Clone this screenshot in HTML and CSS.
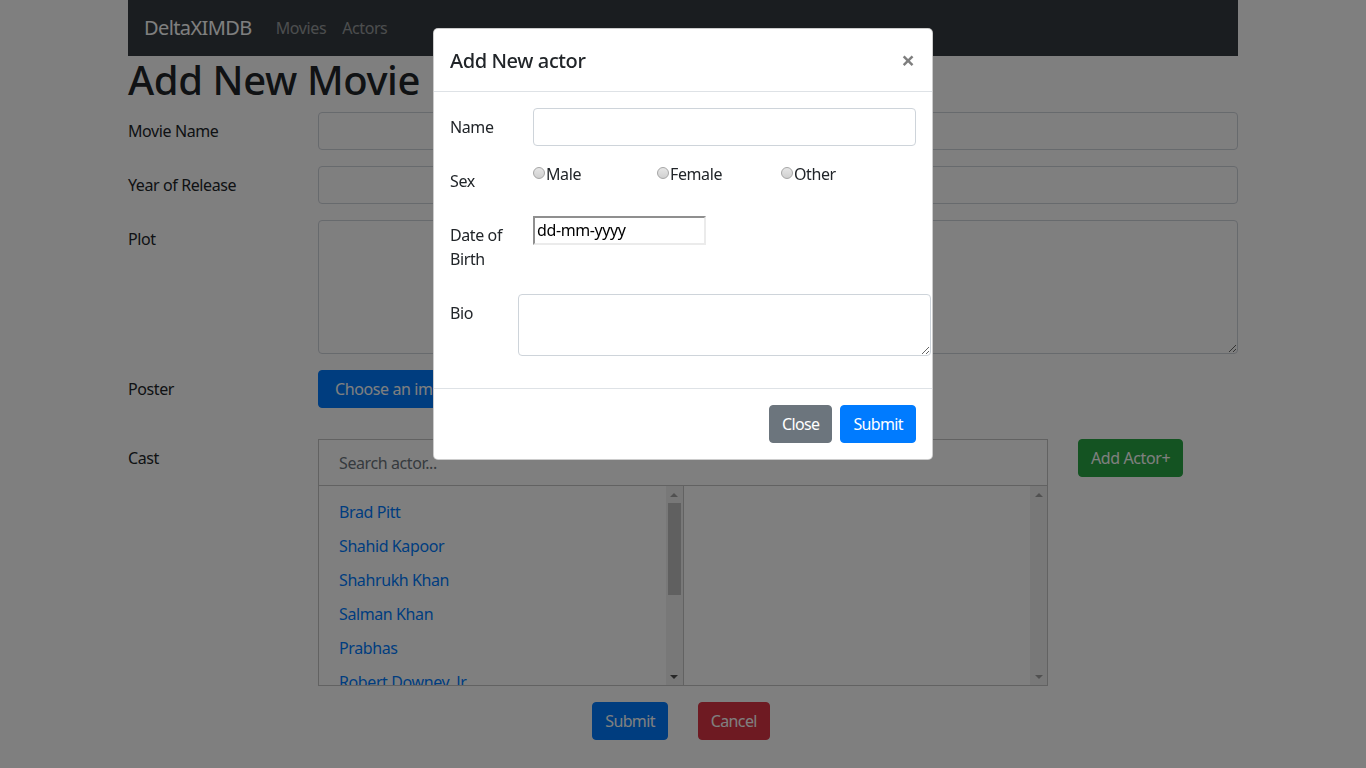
FILE: index.html
```html
<!DOCTYPE html>
<html lang="en">
<head>
<meta charset="utf-8">
<title>DeltaXIMDB - Add New Movie</title>
<link rel="stylesheet" href="styles.css">
</head>
<body>
<div class="container">
  <nav class="navbar">
    <a class="brand" href="#">DeltaXIMDB</a>
    <a class="nav-link" href="#">Movies</a>
    <a class="nav-link" href="#">Actors</a>
  </nav>
  <h1 class="page-title">Add New Movie</h1>
  <form class="movie-form">
    <div class="form-row">
      <label class="col-label">Movie Name</label>
      <div class="col-field"><input class="form-control" type="text"></div>
    </div>
    <div class="form-row">
      <label class="col-label">Year of Release</label>
      <div class="col-field"><input class="form-control" type="text"></div>
    </div>
    <div class="form-row">
      <label class="col-label">Plot</label>
      <div class="col-field"><textarea class="form-control plot" rows="5"></textarea></div>
    </div>
    <div class="form-row poster-row">
      <label class="col-label">Poster</label>
      <div class="col-field"><span class="btn btn-primary btn-file">Choose an image...</span></div>
    </div>
    <div class="form-row">
      <label class="col-label">Cast</label>
      <div class="cast-box">
        <div class="cast-search">Search actor...</div>
        <div class="cast-panes">
          <div class="pane">
            <ul class="pane-list">
              <li><a href="#">Brad Pitt</a></li>
              <li><a href="#">Shahid Kapoor</a></li>
              <li><a href="#">Shahrukh Khan</a></li>
              <li><a href="#">Salman Khan</a></li>
              <li><a href="#">Prabhas</a></li>
              <li><a href="#">Robert Downey, Jr</a></li>
            </ul>
            <div class="scrollbar">
              <span class="sb-btn"><span class="arrow-up off"></span></span>
              <span class="sb-thumb"></span>
              <span class="sb-fill"></span>
              <span class="sb-btn"><span class="arrow-down"></span></span>
            </div>
          </div>
          <div class="pane">
            <ul class="pane-list"></ul>
            <div class="scrollbar">
              <span class="sb-btn"><span class="arrow-up off"></span></span>
              <span class="sb-fill"></span>
              <span class="sb-btn"><span class="arrow-down off"></span></span>
            </div>
          </div>
        </div>
      </div>
      <div class="cast-side"><button type="button" class="btn btn-success">Add Actor+</button></div>
    </div>
    <div class="form-actions">
      <button type="button" class="btn btn-primary">Submit</button>
      <button type="button" class="btn btn-danger">Cancel</button>
    </div>
  </form>
</div>

<div class="backdrop"></div>

<div class="modal">
  <div class="modal-dialog">
    <div class="modal-content">
      <div class="modal-header">
        <h5 class="modal-title">Add New actor</h5>
        <button type="button" class="close">&times;</button>
      </div>
      <div class="modal-body">
        <div class="m-row">
          <label class="m-label">Name</label>
          <div class="m-field"><input class="form-control" type="text"></div>
        </div>
        <div class="m-row">
          <label class="m-label">Sex</label>
          <div class="m-field radio-group">
            <label class="radio-opt"><input type="radio" name="sex">Male</label>
            <label class="radio-opt"><input type="radio" name="sex">Female</label>
            <label class="radio-opt"><input type="radio" name="sex">Other</label>
          </div>
        </div>
        <div class="m-row">
          <label class="m-label">Date of Birth</label>
          <div class="m-field"><div class="date-box">dd-mm-yyyy</div></div>
        </div>
        <div class="m-row">
          <label class="m-label">Bio</label>
          <div class="m-field"><textarea class="form-control bio" rows="2"></textarea></div>
        </div>
      </div>
      <div class="modal-footer">
        <button type="button" class="btn btn-secondary">Close</button>
        <button type="button" class="btn btn-primary">Submit</button>
      </div>
    </div>
  </div>
</div>
</body>
</html>
```
FILE: styles.css
```css
* { box-sizing: border-box; }

body {
  margin: 0;
  font-family: "Noto Sans", "Open Sans", sans-serif;
  font-size: 16px;
  line-height: 1.5;
  letter-spacing: -0.025em;
  color: #212529;
  background: #fff;
  overflow: hidden;
}

.container {
  width: 1110px;
  margin: 0 auto;
}

/* navbar */
.navbar {
  display: flex;
  align-items: center;
  height: 56px;
  padding: 8px 16px;
  background: #343a40;
}
.brand {
  font-size: 20px;
  line-height: 30px;
  padding: 5px 0;
  margin-right: 16px;
  color: #fff;
  text-decoration: none;
  letter-spacing: -0.03em;
}
.nav-link {
  padding: 8px;
  color: rgba(255, 255, 255, 0.5);
  text-decoration: none;
}

.page-title {
  margin: 0 0 8px;
  font-size: 40px;
  font-weight: 500;
  line-height: 1.2;
  letter-spacing: -0.01em;
}

/* form */
.form-row {
  display: flex;
  align-items: flex-start;
  margin-bottom: 16px;
}
.col-label {
  flex: 0 0 190px;
  padding: 7px 0;
  line-height: 24px;
}
.col-field { flex: 1; }

.form-control {
  display: block;
  width: 100%;
  height: 38px;
  padding: 6px 12px;
  font: inherit;
  line-height: 24px;
  color: #495057;
  background: #fff;
  border: 1px solid #ced4da;
  border-radius: 4px;
  margin: 0;
}
textarea.form-control { resize: vertical; }
.plot { height: 134px; }

.poster-row { margin-bottom: 31px; }

.btn {
  display: inline-block;
  font: inherit;
  line-height: 24px;
  letter-spacing: -0.04em;
  padding: 6px 12px;
  border: 1px solid transparent;
  border-radius: 4px;
  color: #fff;
  cursor: pointer;
}
.btn-primary { background: #007bff; border-color: #007bff; }
.btn-secondary { background: #6c757d; border-color: #6c757d; }
.btn-success { background: #28a745; border-color: #28a745; letter-spacing: -0.025em; }
.btn-danger { background: #dc3545; border-color: #dc3545; }
.btn-file { padding: 6px 16px; letter-spacing: -0.025em; }

/* cast */
.cast-box {
  flex: 0 0 730px;
  border: 1px solid #c4c4c4;
}
.cast-search {
  height: 46px;
  padding: 0 20px;
  display: flex;
  align-items: center;
  color: #6c757d;
  border-bottom: 1px solid #c4c4c4;
}
.cast-panes {
  display: flex;
  height: 199px;
}
.pane {
  flex: 1;
  display: flex;
  min-width: 0;
}
.pane + .pane { border-left: 1px solid #c4c4c4; }
.pane-list {
  flex: 1;
  list-style: none;
  margin: 0;
  padding: 9px 0 0;
  overflow: hidden;
}
.pane-list li { padding: 5px 20px; line-height: 24px; }
.pane-list a { color: #007bff; text-decoration: none; }

.scrollbar {
  flex: 0 0 17px;
  display: flex;
  flex-direction: column;
  background: #f1f1f1;
}
.sb-btn {
  flex: 0 0 17px;
  display: flex;
  align-items: center;
  justify-content: center;
}
.sb-thumb {
  flex: 0 0 92px;
  margin: 0 2px;
  background: #c1c1c1;
}
.sb-fill { flex: 1; }
.arrow-up, .arrow-down {
  width: 0;
  height: 0;
  border-left: 4px solid transparent;
  border-right: 4px solid transparent;
}
.arrow-up { border-bottom: 4px solid #505050; }
.arrow-down { border-top: 4px solid #505050; }
.arrow-up.off { border-bottom-color: #a3a3a3; }
.arrow-down.off { border-top-color: #a3a3a3; }

.cast-side { margin-left: 30px; }

.form-actions {
  display: flex;
  justify-content: center;
  gap: 30px;
  padding-right: 4px;
}

/* backdrop & modal */
.backdrop {
  position: fixed;
  inset: 0;
  background: rgba(0, 0, 0, 0.5);
  z-index: 10;
}
.modal {
  position: fixed;
  inset: 0;
  z-index: 20;
}
.modal-dialog {
  width: 500px;
  margin: 28px auto;
}
.modal-content {
  background: #fff;
  border: 1px solid rgba(0, 0, 0, 0.2);
  border-radius: 5px;
}
.modal-header {
  display: flex;
  align-items: flex-start;
  padding: 16px;
  border-bottom: 1px solid #dee2e6;
}
.modal-title {
  margin: 0;
  font-size: 20px;
  font-weight: 500;
  line-height: 30px;
  padding-top: 1px;
  margin-bottom: -1px;
}
.close {
  margin: -16px -15px -16px auto;
  padding: 16px;
  background: none;
  border: 0;
  font-family: inherit;
  font-size: 24px;
  font-weight: 700;
  line-height: 30px;
  color: #000;
  opacity: 0.5;
}
.modal-body { padding: 16px; }
.m-row {
  display: flex;
  align-items: flex-start;
  margin-bottom: 16px;
}
.m-label {
  flex: 0 0 83px;
  padding: 7px 20px 7px 0;
  line-height: 24px;
}
.m-field { flex: 1; min-width: 0; }
.radio-group { display: flex; }
.radio-opt {
  flex: 0 0 124px;
  display: flex;
  align-items: center;
  line-height: 24px;
}
.radio-opt input {
  appearance: none;
  -webkit-appearance: none;
  width: 12px;
  height: 12px;
  margin: 0 1px 0 0;
  border: 1px solid #a6a6a6;
  border-radius: 50%;
  background: linear-gradient(#e6e6e6, #d0d0d0);
  position: relative;
  top: -1px;
}
.date-box {
  width: 173px;
  height: 29px;
  padding: 0 2px;
  line-height: 25px;
  color: #000;
  border-top: 2px solid #8f8f8f;
  border-left: 2px solid #8f8f8f;
  border-right: 2px solid #ebebeb;
  border-bottom: 2px solid #ebebeb;
}
.bio {
  height: 62px;
  width: calc(100% + 30px);
  margin: 0 -15px;
}
.modal-footer {
  display: flex;
  justify-content: flex-end;
  padding: 12px;
  border-top: 1px solid #dee2e6;
}
.modal-footer .btn { margin: 4px; }
```
